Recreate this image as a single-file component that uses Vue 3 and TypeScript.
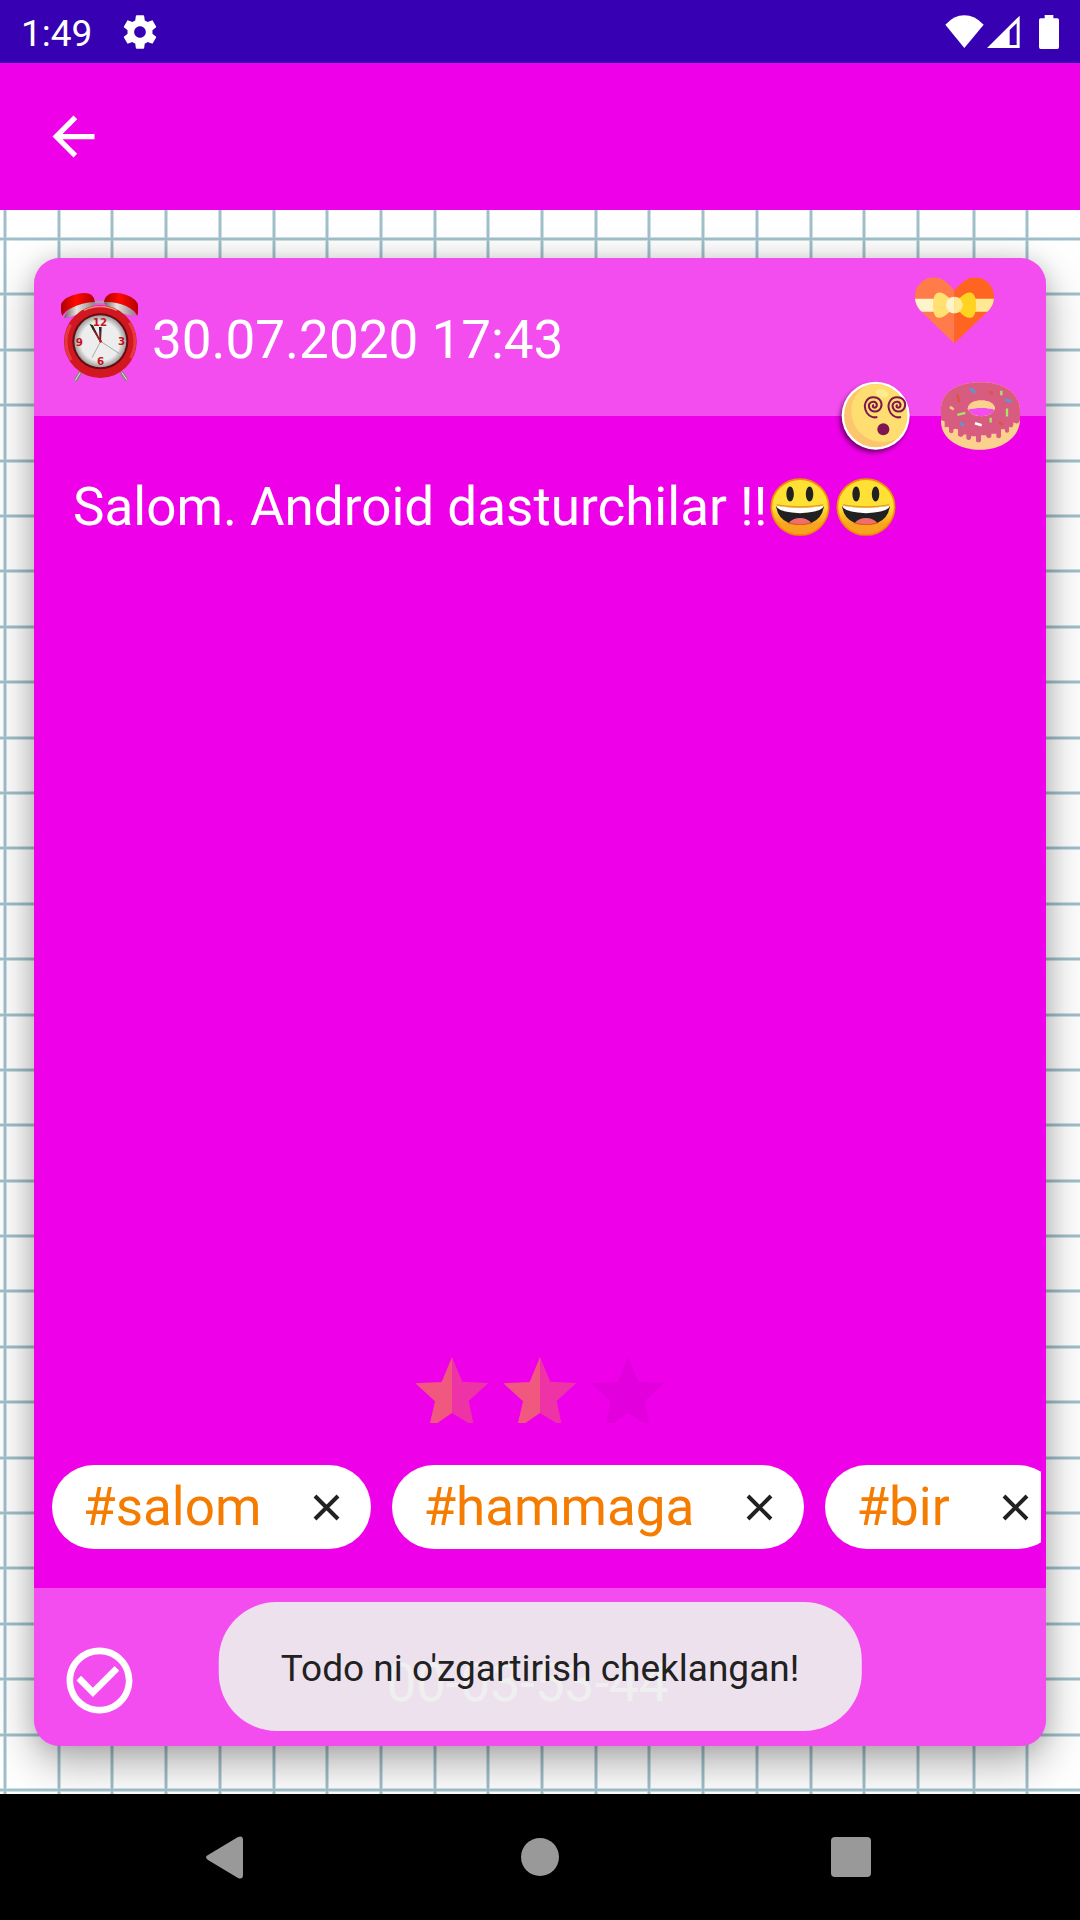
<script setup lang="ts">
import { ref } from 'vue'

const tags = ref<string[]>(['#salom', '#hammaga', '#bir'])
const stars: boolean[] = [true, true, false]

// Squared paper behind the card; the last two squares are a little wider
const columns: number[] = Array.from({ length: 20 }, (_, i) => Math.round(5 + i * 53.7) + (i > 17 ? 2 : 0))
const rows: number[] = Array.from({ length: 29 }, (_, i) => Math.round(29 + (i * 1551) / 28))

function removeTag(tag: string): void {
  tags.value = tags.value.filter((t) => t !== tag)
}
</script>

<template>
  <div class="screen">
    <header class="status">
      <span class="time">1:49</span>
      <svg class="gear" viewBox="0 0 24 24" aria-hidden="true">
        <path
          d="M19.43 12.98c.04-.32.07-.64.07-.98s-.03-.66-.07-.98l2.11-1.65c.19-.15.24-.42.12-.64l-2-3.46c-.12-.22-.39-.3-.61-.22l-2.49 1c-.52-.4-1.08-.73-1.69-.98l-.38-2.65C14.46 2.18 14.25 2 14 2h-4c-.25 0-.46.18-.49.42l-.38 2.65c-.61.25-1.17.59-1.69.98l-2.49-1c-.23-.09-.49 0-.61.22l-2 3.46c-.13.22-.07.49.12.64l2.11 1.65c-.04.32-.07.65-.07.98s.03.66.07.98l-2.11 1.65c-.19.15-.24.42-.12.64l2 3.46c.12.22.39.3.61.22l2.49-1c.52.4 1.08.73 1.69.98l.38 2.65c.03.24.24.42.49.42h4c.25 0 .46-.18.49-.42l.38-2.65c.61-.25 1.17-.59 1.69-.98l2.49 1c.23.09.49 0 .61-.22l2-3.46c.12-.22.07-.49-.12-.64l-2.11-1.65zM12 15.5c-1.93 0-3.5-1.57-3.5-3.5s1.57-3.5 3.5-3.5 3.5 1.57 3.5 3.5-1.57 3.5-3.5 3.5z"
        />
      </svg>
      <div class="signals">
        <svg width="39" height="34" viewBox="135 41 117 102" aria-hidden="true">
          <path d="M193 140 136 70Q162 42 193 42T251 70Z" />
        </svg>
        <svg width="33" height="34" viewBox="262 41 99 102" aria-hidden="true">
          <path fill-rule="evenodd" d="M262 140 360 43V140ZM330 86V131H351V66Z" />
        </svg>
        <svg class="battery" width="20" height="34" viewBox="417 42 60 102" aria-hidden="true">
          <path d="M434 42h26v10h12q5 0 5 5v81q0 6-5 6h-50q-5 0-5-6V57q0-5 5-5h12z" />
        </svg>
      </div>
    </header>

    <div class="appbar">
      <button class="back" type="button" aria-label="Back">
        <svg width="63" height="63" viewBox="0 0 24 24">
          <path d="M20 11H7.83l5.59-5.59L12 4l-8 8 8 8 1.41-1.41L7.83 13H20v-2z" />
        </svg>
      </button>
    </div>

    <main class="paper">
      <svg class="grid" viewBox="0 0 1080 1584" preserveAspectRatio="none" aria-hidden="true">
        <g class="soft">
          <line v-for="x in columns" :key="'a' + x" :x1="x" :x2="x" y1="0" y2="1584" />
          <line v-for="y in rows" :key="'b' + y" x1="0" x2="1080" :y1="y" :y2="y" />
        </g>
        <g class="core">
          <line v-for="x in columns" :key="'c' + x" :x1="x" :x2="x" y1="0" y2="1584" />
          <line v-for="y in rows" :key="'d' + y" x1="0" x2="1080" :y1="y" :y2="y" />
        </g>
      </svg>

      <article class="card">
        <div class="card-head">
          <svg class="clock" width="77" height="89" viewBox="33 39 231 267" aria-hidden="true">
            <defs>
              <linearGradient id="bell" x1="0" x2="1">
                <stop offset="0" stop-color="#a80000" />
                <stop offset=".45" stop-color="#ff0a00" />
                <stop offset="1" stop-color="#b30000" />
              </linearGradient>
              <linearGradient id="metal" x1="0" x2="1">
                <stop offset="0" stop-color="#6b6060" />
                <stop offset=".4" stop-color="#e8e4e0" />
                <stop offset="1" stop-color="#8a8080" />
              </linearGradient>
              <radialGradient id="face">
                <stop offset=".75" stop-color="#ededed" />
                <stop offset="1" stop-color="#9d9d9d" />
              </radialGradient>
            </defs>
            <path d="M92 276 76 303M214 276l16 25" stroke="#8d8583" stroke-width="11" />
            <path d="M90 278 76 301M216 278l14 21" stroke="#ddd" stroke-width="3" />
            <path d="M130 66h42" stroke="#a9a0a0" stroke-width="8" />
            <path d="M42 115Q46 88 84 72T136 68L120 92 70 108Z" fill="url(#metal)" />
            <path d="M258 108Q250 86 216 72T162 68L180 92 234 104Z" fill="url(#metal)" />
            <path d="M37 108Q30 92 34 70 44 50 84 41 112 36 124 44 135 54 134 66 95 68 66 83 44 93 37 108Z" fill="url(#bell)" />
            <path d="M262 108Q266 92 263 70 250 48 212 40 186 36 175 44 163 52 162 66 196 64 228 78 254 90 262 108Z" fill="url(#bell)" />
            <circle cx="151" cy="185" r="109" fill="#d11720" />
            <path d="M62 134A102 102 0 0 0 64 240M238 128A104 104 0 0 1 242 234" fill="none" stroke="#e53a40" stroke-width="9" />
            <path d="M102 91Q150 68 200 91" fill="none" stroke="#ed8b80" stroke-width="5" />
            <circle cx="151" cy="184" r="84" fill="#650d10" />
            <circle cx="151" cy="184" r="78" fill="url(#face)" />
            <g class="hours">
              <text x="150" y="138">12</text>
              <text x="215" y="196">3</text>
              <text x="152" y="256">6</text>
              <text x="88" y="197">9</text>
            </g>
            <path d="M152 184 126 233M152 184l56 37" stroke="#888" stroke-width="2" />
            <path d="M118 131l11 5 24 48-7-4zM147 141h8l-2 45h-4z" fill="#222" />
            <path d="M128 147l24 37M150 154v30" stroke="#d11720" stroke-width="3" />
            <circle cx="152" cy="184" r="4" fill="#c11" />
          </svg>
          <time datetime="2020-07-30T17:43">30.07.2020 17:43</time>
        </div>

        <div class="card-body">
          <p class="note">
            <span>Salom. Android dasturchilar !!</span>
            <svg v-for="n in 2" :key="n" class="smile" viewBox="0 0 174 170" role="img" aria-label="😃">
              <defs>
                <linearGradient id="skin" x1="0" x2="0" y1="0" y2="1">
                  <stop offset=".5" stop-color="#ffe135" />
                  <stop offset=".8" stop-color="#f7a521" />
                </linearGradient>
              </defs>
              <ellipse cx="87" cy="85" rx="84" ry="82" fill="url(#skin)" stroke="#ee8f00" stroke-width="5" />
              <ellipse cx="58" cy="47" rx="11" ry="22" fill="#212121" />
              <ellipse cx="115" cy="47" rx="11" ry="22" fill="#212121" />
              <path d="M17 82Q87 94 157 82 153 118 120 132 87 142 54 132 21 118 17 82Z" fill="#212121" />
              <path d="M17 81Q87 93 157 81 152 101 87 103 22 101 17 81Z" fill="#fff" />
              <path d="M19 79Q87 91 155 79" fill="none" stroke="#ee9a12" stroke-width="4" />
              <path d="M54 131Q66 117 87 117T120 131Q87 143 54 131Z" fill="#ef6f70" />
              <path d="M54 132Q87 141 120 132" fill="none" stroke="#e95b0c" stroke-width="3" />
            </svg>
          </p>

          <div class="rating" role="img" aria-label="2 / 3">
            <svg v-for="(on, i) in stars" :key="i" width="74" height="66" viewBox="46 51 220 198">
              <template v-if="on">
                <path fill="#f0587f" d="M156 51 125 126 46 130 105 184 90 249H112L156 219Z" />
                <path fill="#ed33a6" d="M156 51 187 125 265 129 206 183 220 249H205L156 219Z" />
              </template>
              <path v-else fill="#e200dc" d="M156 51 125 126 46 130 105 184 90 249H112L156 219 205 249H220L206 183 265 129 187 125Z" />
            </svg>
          </div>

          <ul class="chips">
            <li v-for="tag in tags" :key="tag" class="chip">
              <span>{{ tag }}</span>
              <button type="button" :aria-label="'Remove ' + tag" @click="removeTag(tag)">
                <svg width="27" height="27" viewBox="0 0 27 27">
                  <path d="M2 2 25 25M25 2 2 25" stroke="#212121" stroke-width="4" />
                </svg>
              </button>
            </li>
          </ul>
        </div>

        <div class="card-foot">
          <button type="button" aria-label="Done">
            <svg width="79" height="79" viewBox="0 0 24 24">
              <path
                d="M16.59 7.58 10 14.17l-3.59-3.58L5 12l5 5 8-8zM12 2C6.48 2 2 6.48 2 12s4.48 10 10 10 10-4.48 10-10S17.52 2 12 2zm0 18c-4.42 0-8-3.58-8-8s3.58-8 8-8 8 3.58 8 8-3.58 8-8 8z"
              />
            </svg>
          </button>
          <span class="countdown">00-03-53-44</span>
        </div>

        <div class="stickers" aria-hidden="true">
          <svg class="heart" width="79" height="67" viewBox="345 112 237 200">
            <defs>
              <clipPath id="heartClip">
                <path d="M463 151C450 136 430 112 402 112 371 112 345 138 345 170 345 190 352 203 365 216L463 311 562 216C575 203 582 190 582 170 582 138 556 112 525 112 498 112 478 136 463 151Z" />
              </clipPath>
            </defs>
            <g clip-path="url(#heartClip)">
              <path fill="#ff7b4a" d="M345 112h118v200H345z" />
              <path fill="#ff6420" d="M463 112h120v200H463z" />
              <path fill="#fff3cb" d="M345 177h118v39H345z" />
              <path fill="#ffe994" d="M463 177h120v39H463z" />
            </g>
            <path fill="#ffe070" d="M463 174H447Q430 158 418 158 399 158 399 196T418 234Q430 234 447 218H463Z" />
            <path fill="#ffd321" d="M463 174H480Q496 158 509 158 528 158 528 196T509 234Q496 234 480 218H463Z" />
            <path fill="#ff7b4a" d="M447 217 463 221V240H430Z" />
            <path fill="#ff6420" d="M480 217 463 221V240H498Z" />
            <path fill="#fff3cb" d="M463 171a25 25 0 0 0 0 50z" />
            <path fill="#ffe994" d="M463 171a25 25 0 0 1 0 50z" />
          </svg>
          <div class="sticker-row">
            <svg class="dizzy" width="69" height="69" viewBox="125 422 207 207">
              <circle cx="229" cy="526" r="102" fill="#fff" />
              <circle cx="229" cy="526" r="95" fill="#fdc56d" />
              <path fill="#fede70" d="M200 436A95 95 0 0 1 293 596Q245 616 205 594 156 566 156 510 156 464 200 436Z" />
              <ellipse cx="248" cy="459" rx="20" ry="12" fill="#ffec8f" transform="rotate(15 248 459)" />
              <g fill="none" stroke="#7d1550" stroke-width="6">
                <path id="spiral" d="M234 530Q216 535 203 518C188 494 202 471 222 471 243 471 250 489 245 501 238 517 217 518 210 503 205 490 215 483 224 484 235 487 235 500 226 502 218 501 219 495 224 494" />
                <use href="#spiral" x="71" />
              </g>
              <circle cx="252" cy="567" r="18" fill="#7d1550" />
            </svg>
            <svg width="79" height="68" viewBox="423 428 237 203">
              <path
                fill="#fbd18e"
                fill-rule="evenodd"
                d="M423 510C423 455 475 428 541 428S660 455 660 515V545C655 600 600 631 541 631S423 600 423 545ZM504 511C508 522 525 530 544 530S580 522 583 511C570 504 518 504 504 511Z"
              />
              <path
                fill="#d85c80"
                fill-rule="evenodd"
                d="M423 510C423 455 475 428 541 428S660 455 660 515V543Q655 553 650 552T640 548V556Q638 565 633 564T627 562V576Q621 584 615 576V569H603V592Q596 601 589 592V583H574V592Q566 600 559 592V587H543V605Q536 612 528 605V590H513V597Q506 606 499 597V585H492Q484 598 474 588V570Q466 566 460 570V578Q453 585 447 577V564Q440 560 434 564V546Q428 542 423 543ZM503 507C506 491 522 483 544 483S583 491 585 507C581 522 564 530 544 530S506 522 503 507Z"
              />
              <path fill="#fbd18e" d="M503 507C506 491 522 483 544 483S583 491 585 507L583 511C570 504 518 504 504 511Z" />
              <g fill="none" stroke-width="8">
                <path stroke="#4a9fe0" d="M511 447 525 460M615 480l19 5M480 550l11 9" />
                <path stroke="#dd5540" d="M472 465 477 487M569 456l10 8M597 548l11 8" />
                <path stroke="#a5e568" stroke-width="7" d="M604 454V467M621 507v24M472 526l24-6M572 535v14" />
                <path stroke="#fff" d="M525 551 545 557" />
                <path stroke="#fbc97e" d="M450 502 461 510" />
              </g>
            </svg>
          </div>
        </div>

        <div class="toast" role="status">Todo ni o'zgartirish cheklangan!</div>
      </article>
    </main>

    <nav class="navbar">
      <button type="button" aria-label="Back">
        <svg width="63" height="63" viewBox="0 0 63 63">
          <path d="M11 29 41 11Q46 9 46 14V49Q46 54 41 52L11 34Q7 31 11 29Z" />
        </svg>
      </button>
      <button type="button" aria-label="Home">
        <svg width="63" height="63" viewBox="0 0 63 63"><circle cx="31" cy="31" r="19" /></svg>
      </button>
      <button type="button" aria-label="Recent apps">
        <svg width="63" height="63" viewBox="0 0 63 63"><rect x="11" y="11" width="40" height="40" rx="4" /></svg>
      </button>
    </nav>
  </div>
</template>

<style>
body {
  margin: 0;
}
</style>

<style scoped>
.screen {
  display: flex;
  flex-direction: column;
  min-height: 100vh;
  font-family: Roboto, 'Liberation Sans', sans-serif;
  color: #fff;
}

svg {
  display: block;
  flex: none;
}

button {
  display: block;
  padding: 0;
  border: 0;
  background: none;
  cursor: pointer;
}

.status {
  display: flex;
  align-items: center;
  height: 63px;
  padding: 0 21px;
  background: #3700b3;
  fill: #fff;
}

.time {
  font-size: 37px;
  line-height: 44px;
  padding-top: 4px;
}

.gear {
  width: 40px;
  height: 40px;
  margin-left: 28px;
}

.signals {
  display: flex;
  gap: 3px;
  margin-left: auto;
}

.battery {
  margin-left: 16px;
}

.appbar {
  display: flex;
  align-items: center;
  height: 147px;
  padding: 0 42px;
  background: #ee00e8;
}

.back {
  fill: #fff;
}

.paper {
  position: relative;
  z-index: 0;
  display: flex;
  flex: 1;
  padding: 48px 34px;
  overflow: hidden;
  background: #fff;
}

.grid {
  position: absolute;
  inset: 0;
  z-index: -1;
  width: 100%;
  height: 100%;
}

.soft {
  stroke: #cfe0e5;
  stroke-width: 4;
}

.core {
  stroke: #9fbfca;
  stroke-width: 2;
}

.card {
  position: relative;
  display: flex;
  flex: 1;
  flex-direction: column;
  min-width: 0;
  border-radius: 26px;
  background: #ee00e8;
  box-shadow: 0 16px 44px rgba(0, 0, 0, 0.34), 0 0 20px rgba(0, 0, 0, 0.1);
  font-size: 53px;
  line-height: 62px;
}

.card-head {
  display: flex;
  align-items: center;
  gap: 14px;
  box-sizing: border-box;
  height: 158px;
  padding: 0 27px;
  border-radius: 26px 26px 0 0;
  background: rgba(255, 255, 255, 0.3);
}

.card-head time {
  padding-top: 6px;
}

.hours {
  fill: #c9131b;
  font: bold 31px 'DejaVu Sans', sans-serif;
  text-anchor: middle;
}

.card-body {
  display: flex;
  flex: 1;
  flex-direction: column;
  padding: 60px 5px 39px;
}

.note {
  display: flex;
  align-items: center;
  margin: 0;
  padding: 0 34px;
}

.smile {
  width: 60px;
  height: 58px;
  margin: 0 3px;
}

.rating {
  display: flex;
  justify-content: center;
  gap: 14px;
  margin: auto 0 42px;
}

.chips {
  display: flex;
  gap: 21px;
  margin: 0;
  padding: 0 0 0 13px;
  overflow: hidden;
  list-style: none;
}

.chip {
  display: flex;
  flex: none;
  align-items: center;
  gap: 52px;
  height: 84px;
  padding: 0 31px;
  border-radius: 42px;
  background: #fff;
  color: #f57c00;
}

.card-foot {
  display: grid;
  grid-template-columns: auto 1fr 130px;
  align-items: end;
  box-sizing: border-box;
  height: 158px;
  padding: 0 0 26px 26px;
  border-radius: 0 0 26px 26px;
  background: rgba(255, 255, 255, 0.3);
  fill: #fff;
}

.countdown {
  line-height: 74px;
  text-align: center;
}

.stickers {
  position: absolute;
  top: 19px;
  right: 26px;
  display: flex;
  flex-direction: column;
  align-items: flex-end;
  gap: 37px;
}

.heart {
  margin-right: 26px;
}

.sticker-row {
  display: flex;
  align-items: flex-end;
  gap: 31px;
}

.dizzy {
  filter: drop-shadow(-2px 3px 2px rgba(0, 0, 0, 0.5));
}

.toast {
  position: absolute;
  bottom: 15px;
  left: 50%;
  padding: 45px 62px 41px;
  border-radius: 58px;
  background: rgba(238, 238, 238, 0.92);
  color: #212121;
  font-size: 37px;
  line-height: 43px;
  white-space: nowrap;
  transform: translateX(-50%);
}

.navbar {
  display: flex;
  align-items: center;
  justify-content: center;
  gap: 23%;
  height: 126px;
  background: #000;
  fill: #999;
}
</style>
